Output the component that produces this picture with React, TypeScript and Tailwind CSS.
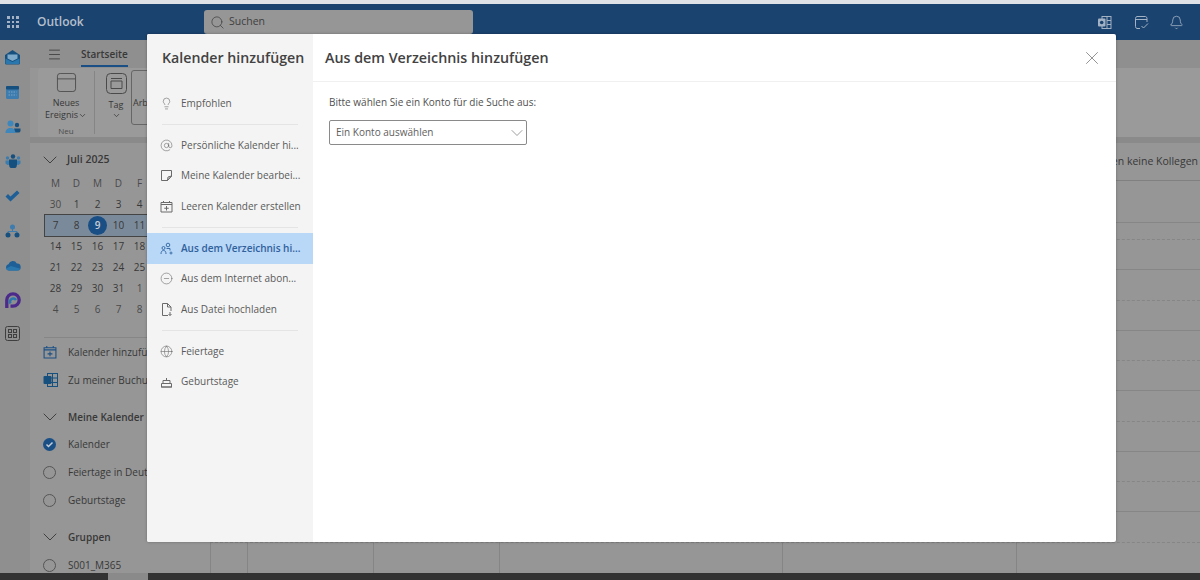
import React from 'react';
import { AtSign, Bell, ChevronDown, CircleMinus, Globe, Lightbulb, Menu, Search, X } from 'lucide-react';

// only the first five weekdays show, the dialog covers the rest
const weeks = [
  ['30', '1', '2', '3', '4'],
  ['7', '8', '9', '10', '11'],
  ['14', '15', '16', '17', '18'],
  ['21', '22', '23', '24', '25'],
  ['28', '29', '30', '31', '1'],
  ['4', '5', '6', '7', '8'],
];

// heights of the time grid rows, taken from the lines on the right side
const slots = [
  { h: 'h-[42px]', line: 'border-solid' },
  { h: 'h-[17px]', line: 'border-dashed' },
  { h: 'h-[30px]', line: 'border-solid' },
  { h: 'h-[31px]', line: 'border-dashed' },
  { h: 'h-[30px]', line: 'border-solid' },
  { h: 'h-[30px]', line: 'border-dashed' },
  { h: 'h-[30px]', line: 'border-solid' },
  { h: 'h-[31px]', line: 'border-dashed' },
  { h: 'h-[30px]', line: 'border-solid' },
  { h: 'h-[30px]', line: 'border-dashed' },
  { h: 'h-[30px]', line: 'border-solid' },
  { h: 'h-[31px]', line: 'border-dashed' },
];

function MailIcon() {
  return (
    <svg width="17" height="16" viewBox="0 0 17 16">
      <path d="M1 6 8.500 1 16 6v8a1.500 1.500 0 0 1-1.500 1.500h-12A1.500 1.500 0 0 1 1 14z" fill="#16507f" />
      <path d="M3.500 5.500h10v4l-5 2.500-5-2.500z" fill="#7fa9c9" />
      <path d="M1.500 9.500 8.500 13l7-3.500v4.500a1 1 0 0 1-1 1h-12a1 1 0 0 1-1-1z" fill="#2a77ad" />
    </svg>
  );
}

function RailCalendarIcon() {
  return (
    <svg width="15" height="15" viewBox="0 0 15 15">
      <rect x="1" y="1" width="13" height="13" rx="1.500" fill="#3d7cae" />
      <rect x="1" y="1" width="13" height="3.500" rx="1" fill="#16507f" />
      <path d="M3.500 7h8M3.500 10h8" stroke="#7ea6c6" strokeDasharray="1.500 1" />
    </svg>
  );
}

function RailPeopleIcon() {
  return (
    <svg width="16" height="14" viewBox="0 0 16 14">
      <circle cx="5.500" cy="3.500" r="3" fill="#3d87bd" />
      <circle cx="12" cy="5" r="2.200" fill="#16507f" />
      <path d="M0.500 13c0-3.500 2-5 5-5s5 1.500 5 5z" fill="#3d87bd" />
      <path d="M9 8.500h6.500V11a2 2 0 0 1-2 1.500h-3z" fill="#16507f" />
    </svg>
  );
}

function RailTeamsIcon() {
  return (
    <svg width="16" height="14" viewBox="0 0 16 14">
      <circle cx="8" cy="2.500" r="2.200" fill="#16507f" />
      <circle cx="2.500" cy="4" r="1.700" fill="#3d7cae" />
      <circle cx="13.500" cy="4" r="1.700" fill="#3d7cae" />
      <path d="M0.500 6.500h4v4l-2 .5-2-1.500zM11.500 6.500h4v3l-2 1.500-2-.5z" fill="#3d7cae" />
      <path d="M4 5.500h8v5a3.500 3.500 0 0 1-8 0z" fill="#16507f" />
    </svg>
  );
}

function RailCheckIcon() {
  return (
    <svg width="15" height="12" viewBox="0 0 15 12">
      <path d="M0.500 6.500 3 4l2.500 2.500L12 0.500 14.500 3l-9 8.500z" fill="#1d5f96" />
    </svg>
  );
}

function RailOrgIcon() {
  return (
    <svg width="15" height="14" viewBox="0 0 15 14">
      <path d="M7.500 4v3M3 10V7.500h9V10" fill="none" stroke="#3d7cae" />
      <circle cx="7.500" cy="3" r="2.500" fill="#3d7cae" />
      <circle cx="3" cy="11" r="2.500" fill="#16507f" />
      <circle cx="12" cy="11" r="2.500" fill="#16507f" />
    </svg>
  );
}

function RailCloudIcon() {
  return (
    <svg width="16" height="11" viewBox="0 0 16 11">
      <path d="M4 10.500a3.200 3.200 0 0 1-.5-6.300A4.500 4.500 0 0 1 11.800 3.500a3.500 3.500 0 0 1 .7 7z" fill="#1d5f96" />
      <path d="M0.800 8.500 6 6l9.500 2.800a3 3 0 0 1-3 1.700H4a3.200 3.200 0 0 1-3.200-2z" fill="#2a77ad" />
    </svg>
  );
}

function RailLoopIcon() {
  return (
    <svg width="16" height="17" viewBox="0 0 16 17">
      <path d="M1.800 16V8a6.200 6.200 0 1 1 6.200 6.200H5.500" fill="none" stroke="#4b2a8c" strokeWidth="3.300" />
      <path d="M5.500 11.500A3 3 0 0 1 11 8" fill="none" stroke="#2a77ad" strokeWidth="2.500" />
    </svg>
  );
}

function RailAppsIcon() {
  return (
    <svg width="15" height="15" viewBox="0 0 15 15" fill="none" stroke="#3f3f3f">
      <rect x="0.500" y="0.500" width="14" height="14" rx="2" />
      <rect x="3.500" y="3.500" width="3" height="3" />
      <rect x="8.500" y="3.500" width="3" height="3" />
      <rect x="3.500" y="8.500" width="3" height="3" />
      <rect x="8.500" y="8.500" width="3" height="3" />
    </svg>
  );
}

function CalendarAddIcon({ size, color }: { size: number; color: string }) {
  return (
    <svg width={size} height={size} viewBox="0 0 13 13" fill="none" stroke={color}>
      <path d="M1 2.500h11v9.500H1zM1 4.500h11M3.500 1v1.500M9.500 1v1.500M6.500 6v4.500M4.250 8.250h4.500" />
    </svg>
  );
}

function NoteIcon() {
  return (
    <svg width="13" height="13" viewBox="0 0 13 13" fill="none" stroke="#6a6a6a">
      <path d="M1.500 1.500h10v5.500l-4 4.500h-6z" />
      <path d="M11.500 7 7.500 11.500 8 8z" />
    </svg>
  );
}

function PeopleAddIcon() {
  return (
    <svg width="13" height="13" viewBox="0 0 13 13" fill="none" stroke="#3b6ea8">
      <circle cx="8" cy="3" r="1.800" />
      <circle cx="3.500" cy="6" r="1.500" />
      <path d="M1 12c0-2.500 1-3.500 2.500-3.500S6 9.500 6 12M6.500 6.500h3.500v2M11 9.500v3M9.500 11h3" />
    </svg>
  );
}

function FileArrowIcon() {
  return (
    <svg width="13" height="13" viewBox="0 0 13 13" fill="none" stroke="#6a6a6a">
      <path d="M2.500 0.500h5l3.500 3.500v4M7.500 0.500V4H11M2.500 0.500v12h5.500M10 9v3.500M8.500 11l1.500 1.500 1.500-1.500" />
    </svg>
  );
}

function CakeIcon() {
  return (
    <svg width="13" height="13" viewBox="0 0 13 13" fill="none" stroke="#6a6a6a">
      <path d="M6.500 3v2.500M3 8.500v-3h7v3M1.500 12V8.500h10V12zM1 12h11" />
    </svg>
  );
}

function OneNoteIcon() {
  return (
    <svg width="15" height="15" viewBox="0 0 15 15">
      <rect x="5" y="1.500" width="9" height="12" fill="none" stroke="#a3b2c4" />
      <path d="M10 1.500v12M10 5.500h4M10 9.500h4" stroke="#a3b2c4" />
      <rect x="1" y="3.500" width="7.500" height="8" rx="1" fill="#a3b2c4" />
      <circle cx="4.700" cy="7.500" r="1.800" fill="#1a436f" />
    </svg>
  );
}

function FeedbackIcon() {
  return (
    <svg width="15" height="15" viewBox="0 0 15 15" fill="none" stroke="#a3b2c4">
      <path d="M6 13.500H3a2 2 0 0 1-1.500-2v-8A2 2 0 0 1 3 1.500h8.500a2 2 0 0 1 1.500 2V7M1.500 4.500H13M7.500 11l2 2L14 8.500" />
    </svg>
  );
}

function NavRow({ icon, label, bold }: { icon: React.ReactNode; label: string; bold?: boolean }) {
  return (
    <div className="flex h-[28px] items-center whitespace-nowrap pl-[13px]">
      <span className="flex w-[25px] shrink-0 items-center">{icon}</span>
      <span className={bold ? 'font-semibold' : ''}>{label}</span>
    </div>
  );
}

function Circle() {
  return <span className="block h-[13px] w-[13px] rounded-full border border-[#555]" />;
}

function Fold() {
  return <ChevronDown size={24} strokeWidth={0.9} className="-ml-[5px] shrink-0" />;
}

function SideItem({ icon, label, active }: { icon: React.ReactNode; label: string; active?: boolean }) {
  return (
    <div className={`flex h-[30.500px] items-center pl-[13px] ${active ? 'bg-[#b9d7f7] font-semibold text-[#2f619c]' : 'text-[#5a5a5a]'}`}>
      <span className="flex w-[21px] shrink-0 items-center">{icon}</span>
      <span className="whitespace-nowrap">{label}</span>
    </div>
  );
}

function Sep() {
  return (
    <div className="flex h-[11.500px] items-center px-[15px]">
      <div className="h-px w-full bg-[#e4e4e4]" />
    </div>
  );
}

export default function App() {
  return (
    <div className="relative flex h-[580px] w-[1200px] flex-col overflow-hidden bg-[#969696] font-['Open_Sans',sans-serif] text-[10px] text-[#383838]">
      <div className="h-[4px] bg-[#dfe3e8]" />

      {/* Top bar */}
      <div className="flex h-[36px] items-center bg-[#1a436f]">
        <div className="w-[37px] shrink-0 pl-[7px]">
          <div className="grid w-fit grid-cols-[repeat(3,2.500px)] gap-[2px]">
            {Array.from({ length: 9 }).map((_, i) => (
              <span key={i} className="h-[2.500px] w-[2.500px] bg-[#a3b2c4]" />
            ))}
          </div>
        </div>
        <span className="w-[167px] text-[12px] font-semibold text-[#b4bfcc]">Outlook</span>
        <div className="flex h-[24px] w-[269px] items-center gap-[4px] rounded-[3px] bg-[#969696] pl-[6px] text-[10.500px] text-[#404040]">
          <Search size={15} strokeWidth={1.200} />
          <span>Suchen</span>
        </div>
        <div className="ml-auto flex items-center pr-[16px]">
          <OneNoteIcon />
          <span className="ml-[22px]"><FeedbackIcon /></span>
          <Bell size={15} strokeWidth={1.300} color="#a3b2c4" className="ml-[20px]" />
        </div>
      </div>

      <div className="flex min-h-0 flex-1">
        {/* App rail */}
        <div className="flex w-[30px] shrink-0 flex-col items-center bg-[#8f8f8f] pr-[5px]">
          {[<MailIcon />, <RailCalendarIcon />, <RailPeopleIcon />, <RailTeamsIcon />, <RailCheckIcon />, <RailOrgIcon />, <RailCloudIcon />, <RailLoopIcon />].map((icon, i) => (
            <div key={i} className="flex h-[34.700px] items-center justify-center">{icon}</div>
          ))}
          <div className="flex h-[31px] items-center justify-center"><RailAppsIcon /></div>
        </div>

        <div className="flex min-w-0 flex-1 flex-col">
          {/* Command bar */}
          <div className="flex h-[28px] shrink-0 items-center bg-[#8f8f8f] pl-[17px]">
            <Menu size={15} strokeWidth={1.200} color="#333" />
            <div className="relative ml-[19px] font-semibold">
              Startseite
              <div className="absolute -bottom-[5px] left-0 h-[2px] w-full bg-[#1a4f85]" />
            </div>
          </div>

          {/* Ribbon */}
          <div className="ml-[8px] flex h-[69px] shrink-0 rounded-l-[4px] bg-[#9a9a9a] text-[9px]">
            <div className="flex w-[56px] flex-col items-center pt-[5px]">
              <svg width="21" height="21" viewBox="0 0 21 21" fill="none" stroke="#4a4a4a">
                <rect x="0.500" y="0.500" width="20" height="20" rx="3" />
                <path d="M0.500 6.500h20" />
              </svg>
              <span className="mt-[5px] leading-[12px]">Neues</span>
              <span className="flex items-center leading-[12px]">Ereignis<ChevronDown size={9} /></span>
              <span className="mt-[4px] text-[8px] leading-[12px] text-[#4a4a4a]">Neu</span>
            </div>
            <div className="my-[3px] w-px bg-[#858585]" />
            <div className="flex w-[36px] flex-col items-center pl-[6px] pt-[5px]">
              <svg width="21" height="21" viewBox="0 0 21 21" fill="none" stroke="#4a4a4a">
                <rect x="0.500" y="0.500" width="20" height="20" rx="4" />
                <path d="M5 5.500h11M5 8h11v7.500H5z" />
              </svg>
              <span className="mt-[5px] leading-[12px]">Tag</span>
              <ChevronDown size={9} />
            </div>
            <div className="mt-[2px] h-[55px] w-[60px] overflow-hidden whitespace-nowrap rounded-[3px] border border-[#666] pl-[1px] pt-[26px] leading-[12px]">Arb</div>
          </div>
          <div className="h-[6px] shrink-0 bg-[#8a8a8a]" />

          <div className="flex min-h-0 flex-1">
            {/* Folder pane */}
            <div className="w-[180px] shrink-0 overflow-hidden">
              <div className="mt-[9px] flex h-[16px] items-center pl-[8px] text-[10.500px] font-semibold">
                <ChevronDown size={24} strokeWidth={0.9} className="shrink-0" />
                <span className="ml-[5px]">Juli 2025</span>
              </div>
              <div className="ml-[15px] mt-[5px] w-[147px]">
                <div className="flex h-[21px]">
                  {['M', 'D', 'M', 'D', 'F'].map((d, i) => (
                    <span key={i} className="flex w-[21px] items-center justify-center text-[#4a4a4a]">{d}</span>
                  ))}
                </div>
                {weeks.map((week, w) => (
                  <div key={w} className={`flex h-[21px] ${w === 1 ? 'bg-[#7b8a9b] outline outline-[#444]' : ''}`}>
                    {week.map((d, i) => (
                      <span key={i} className={`flex w-[21px] items-center justify-center ${w === 0 && i === 0 ? 'text-[#4a4a4a]' : ''} ${w === 5 || (w === 4 && i > 3) ? 'text-[#4a4a4a]' : ''}`}>
                        {w === 1 && i === 2 ? (
                          <span className="flex h-[19px] w-[19px] shrink-0 items-center justify-center rounded-full bg-[#1a4f85] font-semibold text-[#c4ccd6]">{d}</span>
                        ) : (
                          d
                        )}
                      </span>
                    ))}
                  </div>
                ))}
              </div>
              <div className="ml-[14px] mt-[17px] h-px bg-[#868686]" />
              <NavRow icon={<CalendarAddIcon size={14} color="#1a4f85" />} label="Kalender hinzufügen" />
              <NavRow
                icon={
                  <svg width="15" height="14" viewBox="0 0 15 14">
                    <rect x="4.500" y="0.500" width="10" height="13" fill="none" stroke="#16507f" />
                    <path d="M9.500 0.500v13M4.500 5h10M4.500 9.500h10" stroke="#16507f" />
                    <rect x="0.500" y="3" width="8" height="8" rx="1" fill="#16507f" />
                  </svg>
                }
                label="Zu meiner Buchungsseite"
              />
              <div className="h-[9px]" />
              <div className="-mb-[1px]">
                <NavRow icon={<Fold />} label="Meine Kalender" bold />
              </div>
              <NavRow
                icon={
                  <span className="flex h-[13px] w-[13px] items-center justify-center rounded-full bg-[#1a4f85]">
                    <svg width="9" height="9" viewBox="0 0 9 9" fill="none" stroke="#c4ccd6" strokeWidth="1.500"><path d="m1.500 4.500 2 2 4-4" /></svg>
                  </span>
                }
                label="Kalender"
              />
              <NavRow icon={<Circle />} label="Feiertage in Deutschland" />
              <NavRow icon={<Circle />} label="Geburtstage" />
              <div className="h-[9px]" />
              <NavRow icon={<Fold />} label="Gruppen" bold />
              <NavRow icon={<Circle />} label="S001_M365" />
            </div>

            {/* Time grid */}
            <div className="relative flex min-w-0 flex-1 flex-col overflow-hidden">
              <div className="flex h-[38px] shrink-0 items-end justify-end whitespace-nowrap border-b border-[#808080] pb-[10px] pr-[2px] text-[10.500px]">
                Für diesen Tag wurden keine Kollegen
              </div>
              <div className="min-h-0 flex-1">
                {slots.map((s, i) => (
                  <div key={i} className={`${s.h} border-b border-[#868686] ${s.line}`} />
                ))}
              </div>
              <div className="absolute bottom-0 left-0 flex h-[31px] w-[990px]">
                {['w-[37px]', 'w-[126px]', 'w-[126px]', 'w-[283px]', 'w-[234px]', 'w-[184px]'].map((w, i) => (
                  <div key={i} className={`${w} border-l border-[#858585]`} />
                ))}
              </div>
            </div>
          </div>
        </div>
      </div>

      {/* Bottom scroll bar */}
      <div className="flex h-[7px] shrink-0 bg-[#333] pl-[108px]">
        <div className="w-[40px] bg-[#8a8a8a]" />
      </div>

      {/* Dialog */}
      <div className="absolute left-[147px] top-[34px] flex h-[508px] w-[969px] overflow-hidden rounded-[2px] bg-white shadow-[0_0_3px_rgba(0,0,0,0.3)]">
        <div className="w-[166px] shrink-0 bg-[#f4f4f4] text-[10px]">
          <div className="flex h-[54px] items-center whitespace-nowrap pb-[7px] pl-[15px] text-[14.200px] font-semibold text-[#424242]">
            Kalender hinzufügen
          </div>
          <SideItem icon={<Lightbulb size={13} strokeWidth={1.100} color="#6a6a6a" />} label="Empfohlen" />
          <Sep />
          <SideItem icon={<AtSign size={13} strokeWidth={1.100} color="#6a6a6a" />} label="Persönliche Kalender hi..." />
          <SideItem icon={<NoteIcon />} label="Meine Kalender bearbei..." />
          <SideItem icon={<CalendarAddIcon size={13} color="#6a6a6a" />} label="Leeren Kalender erstellen" />
          <Sep />
          <SideItem icon={<PeopleAddIcon />} label="Aus dem Verzeichnis hi..." active />
          <SideItem icon={<CircleMinus size={13} strokeWidth={1.100} color="#6a6a6a" />} label="Aus dem Internet abon..." />
          <SideItem icon={<FileArrowIcon />} label="Aus Datei hochladen" />
          <Sep />
          <SideItem icon={<Globe size={13} strokeWidth={1.100} color="#6a6a6a" />} label="Feiertage" />
          <SideItem icon={<CakeIcon />} label="Geburtstage" />
        </div>
        <div className="min-w-0 flex-1">
          <div className="flex h-[48px] items-center justify-between border-b border-[#f0f0f0] pl-[12px] pr-[13px]">
            <span className="text-[14.300px] font-semibold text-[#424242]">Aus dem Verzeichnis hinzufügen</span>
            <X size={22} strokeWidth={1} color="#8a8a8a" />
          </div>
          <div className="pl-[16px] pt-[13px] text-[10px] text-[#505050]">
            <div className="leading-[14px]">Bitte wählen Sie ein Konto für die Suche aus:</div>
            <div className="mt-[11px] flex h-[25px] w-[198px] items-center justify-between rounded-[2px] border border-[#8a8a8a] pl-[6px] text-[#606060]">
              <span>Ein Konto auswählen</span>
              <ChevronDown size={20} strokeWidth={1} color="#8a8a8a" className="-mr-[1px]" />
            </div>
          </div>
        </div>
      </div>
    </div>
  );
}
